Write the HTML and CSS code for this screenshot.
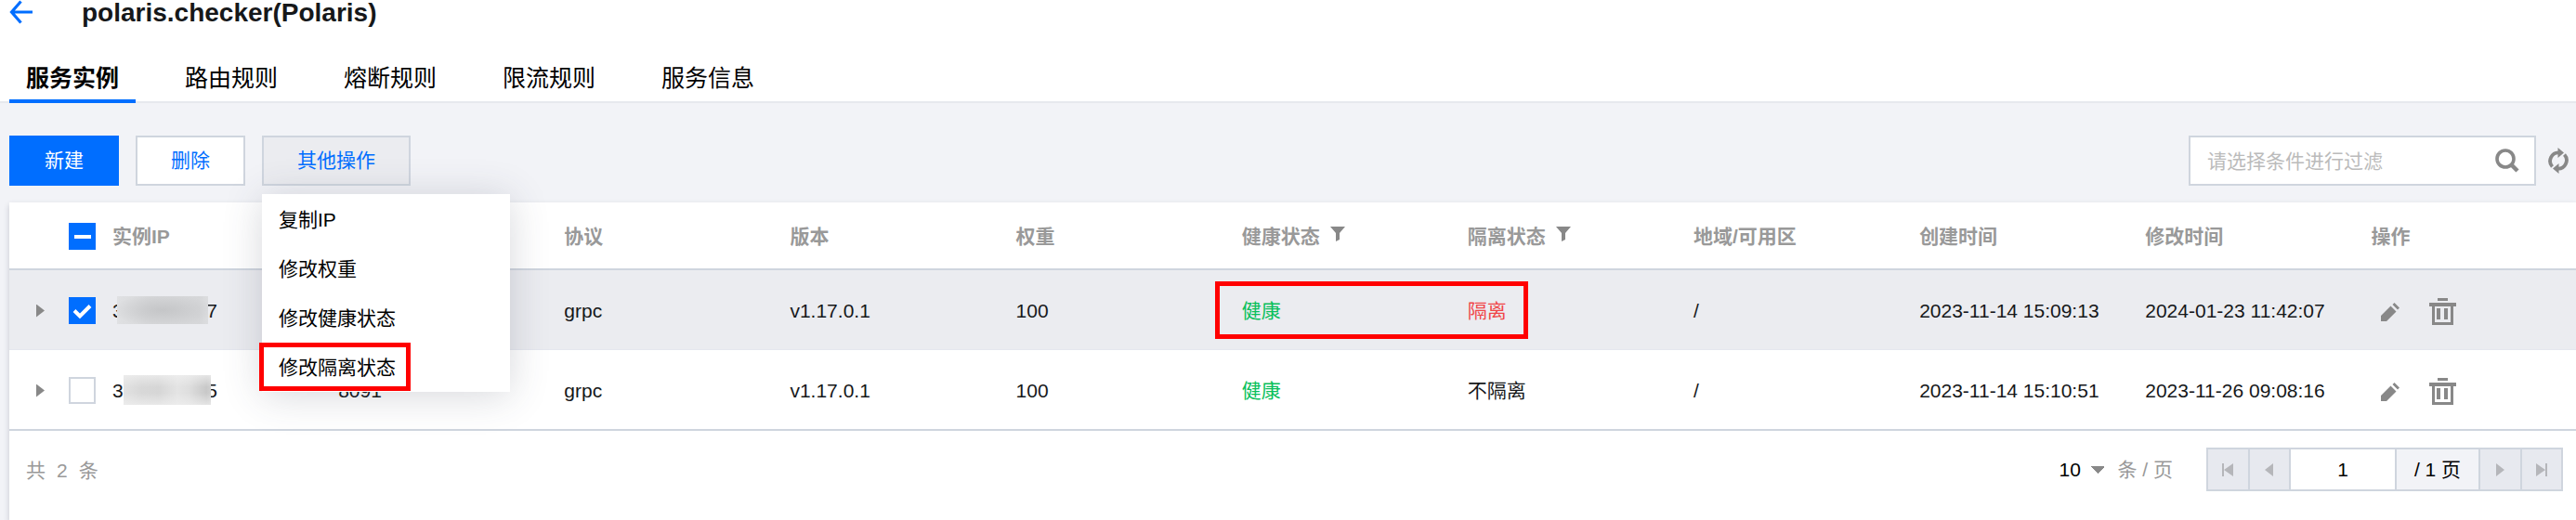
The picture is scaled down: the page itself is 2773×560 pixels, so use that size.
FILE: index.html
```html
<!DOCTYPE html>
<html lang="zh-CN">
<head>
<meta charset="utf-8">
<title>polaris.checker(Polaris)</title>
<link rel="stylesheet" href="styles.css">
</head>
<body>
<svg class="defs" aria-hidden="true">
  <symbol id="i-filter" viewBox="0 0 16 16"><path d="M0 0h16l-6 7v7l-4 2V7z"/></symbol>
  <symbol id="i-edit" viewBox="0 0 20 20"><path d="M0 20v-6L10.500 3.500l6 6L6 20zM12.500 2L14.500 0l5.500 5.500-2 2z"/></symbol>
  <symbol id="i-trash" viewBox="0 0 29 29"><path d="M9 0h11v3H9zM0 5h29v4h-3v20H3V9H0zm6 4v17h17V9zm2 2h4v12H8zm8 0h4v12h-4z" fill-rule="evenodd"/></symbol>
</svg>
<header class="page-head">
  <div class="title-row">
    <a class="back" href="#" aria-label="返回"><svg width="25" height="26" viewBox="0 0 25 26"><path d="M12.500 1.500L2.500 13l10 11.500M2 13h23" fill="none" stroke="#006eff" stroke-width="3.200"/></svg></a>
    <h1>polaris.checker(Polaris)</h1>
  </div>
  <nav class="tabs">
    <a class="tab active" href="#">服务实例</a>
    <a class="tab" href="#">路由规则</a>
    <a class="tab" href="#">熔断规则</a>
    <a class="tab" href="#">限流规则</a>
    <a class="tab" href="#">服务信息</a>
  </nav>
</header>
<main>
  <div class="toolbar">
    <button class="btn primary" type="button">新建</button>
    <button class="btn" type="button">删除</button>
    <div class="dropdown">
      <button class="btn open" type="button" aria-expanded="true">其他操作</button>
      <div class="menu">
        <button type="button">复制IP</button>
        <button type="button">修改权重</button>
        <button type="button">修改健康状态</button>
        <button type="button" class="marked">修改隔离状态</button>
      </div>
    </div>
    <div class="search">
      <input type="text" aria-label="过滤条件" placeholder="请选择条件进行过滤">
      <button class="icon-btn" type="button" aria-label="搜索"><svg width="26" height="26" viewBox="0 0 26 26"><circle cx="11" cy="11" r="9" fill="none" stroke="#888" stroke-width="3.600"/><path d="M17 17l7 7" stroke="#888" stroke-width="4.500"/></svg></button>
    </div>
    <button class="icon-btn refresh" type="button" aria-label="刷新"><svg width="22" height="28" viewBox="0 0 22 28"><path d="M4.500 20.500A9 9 0 0 1 12 5.500M17.500 7.500A9 9 0 0 1 10 22.500" fill="none" stroke="#888" stroke-width="3.800"/><path d="M10.500 0l6.500 5.500-6.500 5.500zM11.500 17v11L5 22.500z" fill="#888"/></svg></button>
  </div>
  <section class="panel">
    <table>
      <colgroup><col class="c-select"><col><col><col><col><col><col><col><col><col><col><col class="c-last"></colgroup>
      <thead>
        <tr>
          <th><input class="check some" type="checkbox" aria-label="全选"></th>
          <th>实例IP</th><th aria-label="端口"></th><th>协议</th><th>版本</th><th>权重</th>
          <th>健康状态<svg class="filter"><use href="#i-filter"/></svg></th>
          <th>隔离状态<svg class="filter"><use href="#i-filter"/></svg></th>
          <th>地域/可用区</th><th>创建时间</th><th>修改时间</th><th>操作</th>
        </tr>
      </thead>
      <tbody>
        <tr class="selected">
          <td><span class="select"><button class="expand" type="button" aria-label="展开"></button><input class="check" type="checkbox" checked aria-label="选择实例"></span></td>
          <td><span class="ip"><span>3</span><span>7</span><i class="mask mask-a"></i></span></td>
          <td></td><td>grpc</td><td>v1.17.0.1</td><td>100</td>
          <td class="ok"><span class="status">健康<i class="frame"></i></span></td>
          <td class="bad">隔离</td>
          <td>/</td><td>2023-11-14 15:09:13</td><td>2024-01-23 11:42:07</td>
          <td><span class="actions"><button class="icon-btn" type="button" aria-label="编辑"><svg width="20" height="20"><use href="#i-edit"/></svg></button><button class="icon-btn" type="button" aria-label="删除"><svg width="29" height="29"><use href="#i-trash"/></svg></button></span></td>
        </tr>
        <tr>
          <td><span class="select"><button class="expand" type="button" aria-label="展开"></button><input class="check" type="checkbox" aria-label="选择实例"></span></td>
          <td><span class="ip"><span>3</span><span>5</span><i class="mask mask-b"></i></span></td>
          <td>8091</td><td>grpc</td><td>v1.17.0.1</td><td>100</td>
          <td class="ok">健康</td>
          <td>不隔离</td>
          <td>/</td><td>2023-11-14 15:10:51</td><td>2023-11-26 09:08:16</td>
          <td><span class="actions"><button class="icon-btn" type="button" aria-label="编辑"><svg width="20" height="20"><use href="#i-edit"/></svg></button><button class="icon-btn" type="button" aria-label="删除"><svg width="29" height="29"><use href="#i-trash"/></svg></button></span></td>
        </tr>
      </tbody>
    </table>
    <footer class="foot">
      <p class="total"><span>共</span><span>2</span><span>条</span></p>
      <div class="paging">
        <label class="size"><select aria-label="每页条数"><option>10</option></select><span>条 / 页</span></label>
        <div class="pager">
          <button type="button" aria-label="首页"><svg width="12" height="16" viewBox="0 0 12 16"><path d="M0 1h2v14H0zM12 1v14L2 8z"/></svg></button>
          <button type="button" aria-label="上一页"><svg width="12" height="16" viewBox="0 0 12 16"><path d="M10 1v14L1 8z"/></svg></button>
          <input type="text" value="1" aria-label="页码">
          <span class="pages">/ 1 页</span>
          <button type="button" aria-label="下一页"><svg width="12" height="16" viewBox="0 0 12 16"><path d="M2 1v14l9-7z"/></svg></button>
          <button type="button" aria-label="末页"><svg width="12" height="16" viewBox="0 0 12 16"><path d="M10 1h2v14h-2zM0 1v14l10-7z"/></svg></button>
        </div>
      </div>
    </footer>
  </section>
</main>
</body>
</html>
```
FILE: styles.css
```css
*, *::after { box-sizing: border-box; }
body {
  margin: 0;
  min-height: 100vh;
  display: flex;
  flex-direction: column;
  background: #f2f3f7;
  color: #16181a;
  font: 21px/32px "Liberation Sans", "Noto Sans CJK SC", sans-serif;
  overflow: hidden;
}
button, input, select { font: inherit; color: inherit; margin: 0; padding: 0; }
button { border: 0; background: none; }
a { color: inherit; text-decoration: none; }
.defs { position: absolute; width: 0; height: 0; }

.page-head { background: #fff; border-bottom: 2px solid #e7e9ee; padding-left: 10px; }
.title-row { display: flex; align-items: flex-start; gap: 53px; height: 60px; }
.back { display: flex; }
h1 { margin: 0; font-size: 28px; line-height: 28px; }
.tabs { display: flex; gap: 35px; height: 49px; }
.tab {
  height: 51px;
  padding: 4px 18px 0;
  border-bottom: 4px solid transparent;
  font-size: 25px;
  line-height: 40px;
  color: #000;
}
.tab.active { border-color: #006eff; font-weight: 700; }

main { flex: 1; display: flex; flex-direction: column; padding: 35px 0 0 10px; }
.toolbar { display: flex; align-items: center; height: 54px; margin-bottom: 18px; padding-right: 8px; }
.btn {
  height: 54px;
  margin-right: 18px;
  padding: 0 36px;
  border: 2px solid #cfd5de;
  background: #fff;
  color: #006eff;
}
.btn.primary { background: #006eff; border-color: #006eff; color: #fff; }
.dropdown { position: relative; }
.btn.open { background: #ebecf0; }
.menu {
  position: absolute;
  z-index: 5;
  top: 63px;
  left: 0;
  width: 267px;
  padding-top: 1px;
  background: #fff;
  box-shadow: 0 4px 40px rgba(54, 58, 80, .2);
}
.menu button { position: relative; display: block; width: 100%; height: 53px; padding-left: 18px; text-align: left; color: #000; }
.marked::after { content: ""; position: absolute; left: -3px; top: 0; width: 163px; height: 52px; border: 5px solid #f00; }
.search {
  display: flex;
  align-items: center;
  width: 374px;
  height: 54px;
  margin-left: auto;
  padding: 0 16px 0 18px;
  border: 2px solid #cfd5de;
  background: #fff;
}
.search input { flex: 1; min-width: 0; height: 40px; padding-top: 2px; border: 0; outline: 0; background: none; }
.search input::placeholder { color: #bbb; opacity: 1; }
.icon-btn { display: flex; fill: #888; }
.refresh { margin-left: 13px; }

.panel { flex: 1; background: #fff; box-shadow: 0 3px 6px rgba(54, 58, 80, .24); }
table { width: 100%; table-layout: fixed; border-collapse: separate; border-spacing: 0; }
col { width: 8.8%; }
.c-select { width: 93px; }
.c-last { width: auto; }
th, td { padding: 2px 0 0 18px; text-align: left; white-space: nowrap; }
th { height: 73px; border-bottom: 2px solid #cfd5de; color: #999; }
td { height: 86px; border-bottom: 1px solid #e5e7ee; }
tr:last-child td { height: 87px; border-bottom: 2px solid #cfd5de; }
th:first-child, td:first-child { padding-left: 0; }
th:first-child .check { margin-left: 64px; }
.selected td { background: #ebecf0; }
.filter { width: 16px; height: 16px; margin-left: 11px; vertical-align: 2px; fill: #888; }
.check {
  appearance: none;
  display: block;
  width: 29px;
  height: 29px;
  border: 2px solid #cfd5de;
  background: #fff center / 29px 29px no-repeat;
}
.check.some, .check:checked { border-color: #006eff; background-color: #006eff; background-origin: border-box; }
.check.some { background-image: linear-gradient(#fff, #fff); background-size: 18px 4px; }
.check:checked { background-image: url("data:image/svg+xml,%3Csvg xmlns='http://www.w3.org/2000/svg' viewBox='0 0 29 29'%3E%3Cpath d='M6 14.500l6 6L23 9.500' fill='none' stroke='white' stroke-width='4'/%3E%3C/svg%3E"); }
.select { display: flex; align-items: center; gap: 26px; padding-left: 29px; }
.expand { width: 9px; height: 14px; background: #888; clip-path: polygon(0 0, 100% 50%, 0 100%); }
.ip { position: relative; display: flex; justify-content: space-between; width: 113px; }
.mask { position: absolute; }
.mask-a { left: 5px; top: 0; width: 98px; height: 30px; background: radial-gradient(ellipse at 50% 50%, rgba(196, 197, 199, .9), rgba(222, 223, 225, .6) 80%), linear-gradient(90deg, #e2e3e5, #cbccce 35%, #c9cacc 90%, #d8d9db); }
.mask-b { left: 12px; top: -1px; width: 94px; height: 32px; background: linear-gradient(rgba(240, 240, 240, .7), transparent 40%, transparent 60%, rgba(240, 240, 240, .7)), linear-gradient(90deg, #e2e2e2, #d8d8d8 20%, #d6d6d6 40%, #e4e4e4 62%, #dedede 75%, #c8c8c8 95%, #d0d0d0); }
.ok { color: #0abf5b; }
.bad { color: #f04648; }
.status { position: relative; }
.frame { position: absolute; z-index: 2; left: -29px; top: -20px; width: 337px; height: 62px; border: 5px solid #f00; }
.actions { display: flex; align-items: center; gap: 32px; padding: 2px 0 0 11px; }

.foot { display: flex; align-items: center; justify-content: space-between; padding: 18px 14px 0 18px; color: #999; }
.total { display: flex; gap: 12px; margin: 0; padding-top: 2px; }
.paging, .size { display: flex; align-items: center; }
.size select {
  appearance: none;
  width: 49px;
  margin-right: 14px;
  border: 0;
  background: conic-gradient(from -45deg at 50% 100%, #888 90deg, transparent 0) right 50% / 14px 8px no-repeat;
  color: #000;
}
.pager { display: flex; width: 384px; height: 47px; margin-left: 36px; border: 2px solid #cfd5de; color: #000; }
.pager > * { height: 43px; }
.pager > * + * { border: 0 solid #cfd5de; border-left-width: 2px; }
.pager button { flex: 1; display: flex; align-items: center; justify-content: center; background: #e7e9ef; fill: #b5b6ba; }
.pager input { width: 114px; background: #fff; text-align: center; }
.pages { width: 90px; background: #f2f3f7; text-align: center; line-height: 43px; }
```
